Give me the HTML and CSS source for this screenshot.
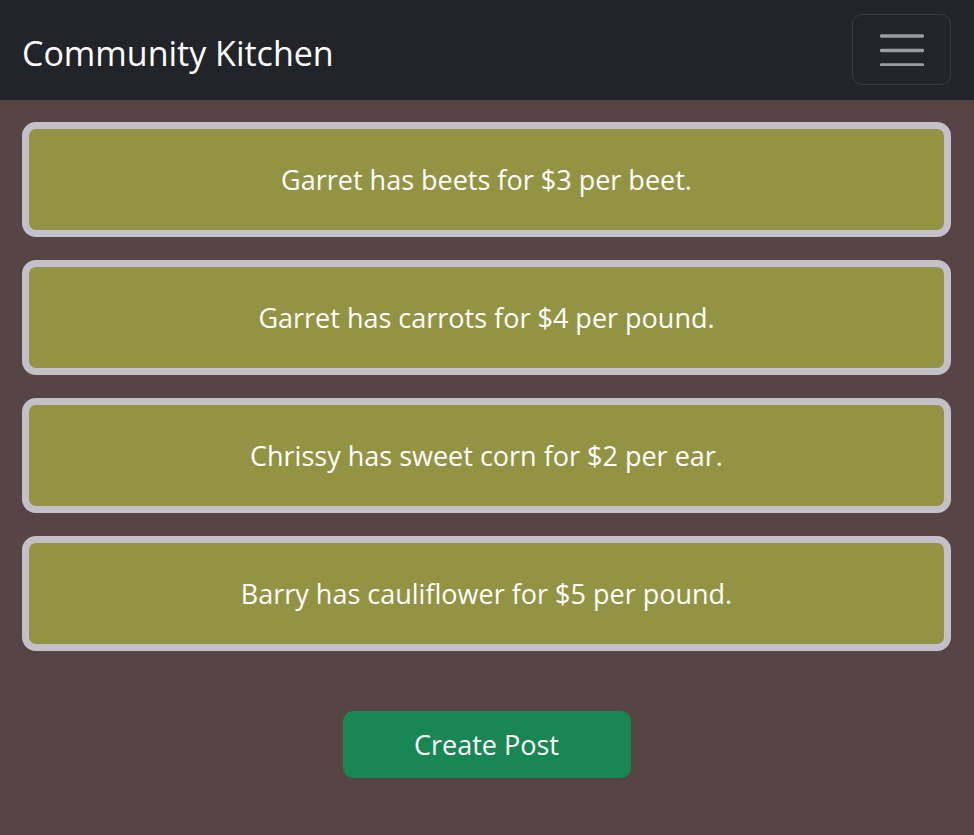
FILE: index.html
```html
<!DOCTYPE html>
<html lang="en">
<head>
<meta charset="utf-8">
<title>Community Kitchen</title>
<link rel="stylesheet" href="styles.css">
</head>
<body>
<nav class="navbar">
  <a class="brand" href="#">Community Kitchen</a>
  <button class="toggler" type="button" aria-label="Toggle navigation">
    <svg width="44" height="32" viewBox="0 0 44 32" aria-hidden="true">
      <path d="M1.5 2H42.5M1.5 16.5H42.5M1.5 31H42.5" stroke="rgba(255,255,255,0.55)" stroke-width="3.5" stroke-linecap="round" fill="none"/>
    </svg>
  </button>
</nav>
<main class="content">
  <div class="posts">
    <div class="post">Garret has beets for $3 per beet.</div>
    <div class="post">Garret has carrots for $4 per pound.</div>
    <div class="post">Chrissy has sweet corn for $2 per ear.</div>
    <div class="post">Barry has cauliflower for $5 per pound.</div>
  </div>
  <div class="actions">
    <button class="create-btn" type="button">Create Post</button>
  </div>
</main>
</body>
</html>
```
FILE: styles.css
```css
html, body {
  margin: 0;
  padding: 0;
}
body {
  background: #574546;
  font-family: "Open Sans", "Noto Sans", sans-serif;
  color: #fff;
  min-height: 835px;
}
.navbar {
  background: #212529;
  height: 100px;
  box-sizing: border-box;
  padding: 14px 23px 15px 22px;
  display: flex;
  align-items: center;
  justify-content: space-between;
}
.brand {
  color: #fff;
  text-decoration: none;
  font-size: 34px;
  line-height: 1.2;
  margin-top: 8px;
}
.toggler {
  width: 99px;
  height: 71px;
  box-sizing: border-box;
  background: transparent;
  border: 1.5px solid rgba(255, 255, 255, 0.1);
  border-radius: 10px;
  padding: 0;
  display: flex;
  align-items: center;
  justify-content: center;
}
.toggler svg {
  display: block;
}
.content {
  padding: 22px 23px 0 22px;
}
.posts {
  display: flex;
  flex-direction: column;
  gap: 23px;
}
.post {
  height: 115px;
  box-sizing: border-box;
  background: #939443;
  border: 7px solid #c3c0ca;
  border-radius: 14px;
  display: flex;
  align-items: center;
  justify-content: center;
  font-size: 27px;
  line-height: 42px;
  color: #fff;
}
.actions {
  display: flex;
  justify-content: center;
  padding-top: 60px;
}
.create-btn {
  width: 288px;
  height: 67px;
  background: #198754;
  color: #fff;
  border: none;
  border-radius: 10px;
  font-family: "Open Sans", "Noto Sans", sans-serif;
  font-size: 27px;
  line-height: 42px;
  padding: 0;
}
```
